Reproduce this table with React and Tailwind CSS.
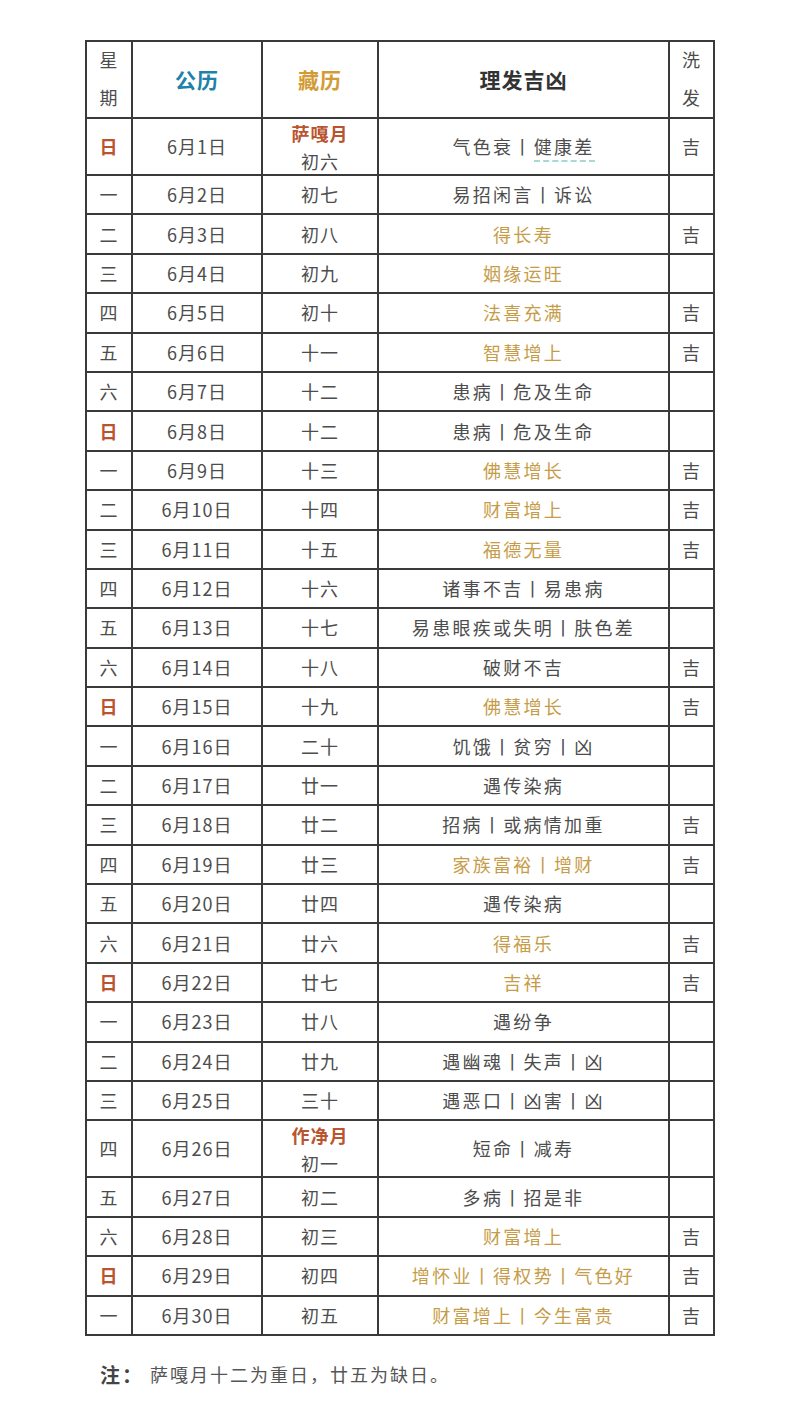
import React from "react";

const rows = [
  ["日", "6月1日", ["萨嘎月", "初六"], "气色衰丨健康差", true, "吉"],
  ["一", "6月2日", "初七", "易招闲言丨诉讼", false, ""],
  ["二", "6月3日", "初八", "得长寿", true, "吉"],
  ["三", "6月4日", "初九", "姻缘运旺", true, ""],
  ["四", "6月5日", "初十", "法喜充满", true, "吉"],
  ["五", "6月6日", "十一", "智慧增上", true, "吉"],
  ["六", "6月7日", "十二", "患病丨危及生命", false, ""],
  ["日", "6月8日", "十二", "患病丨危及生命", false, ""],
  ["一", "6月9日", "十三", "佛慧增长", true, "吉"],
  ["二", "6月10日", "十四", "财富增上", true, "吉"],
  ["三", "6月11日", "十五", "福德无量", true, "吉"],
  ["四", "6月12日", "十六", "诸事不吉丨易患病", false, ""],
  ["五", "6月13日", "十七", "易患眼疾或失明丨肤色差", false, ""],
  ["六", "6月14日", "十八", "破财不吉", false, "吉"],
  ["日", "6月15日", "十九", "佛慧增长", true, "吉"],
  ["一", "6月16日", "二十", "饥饿丨贫穷丨凶", false, ""],
  ["二", "6月17日", "廿一", "遇传染病", false, ""],
  ["三", "6月18日", "廿二", "招病丨或病情加重", false, "吉"],
  ["四", "6月19日", "廿三", "家族富裕丨增财", true, "吉"],
  ["五", "6月20日", "廿四", "遇传染病", false, ""],
  ["六", "6月21日", "廿六", "得福乐", true, "吉"],
  ["日", "6月22日", "廿七", "吉祥", true, "吉"],
  ["一", "6月23日", "廿八", "遇纷争", false, ""],
  ["二", "6月24日", "廿九", "遇幽魂丨失声丨凶", false, ""],
  ["三", "6月25日", "三十", "遇恶口丨凶害丨凶", false, ""],
  ["四", "6月26日", ["作净月", "初一"], "短命丨减寿", false, ""],
  ["五", "6月27日", "初二", "多病丨招是非", false, ""],
  ["六", "6月28日", "初三", "财富增上", true, "吉"],
  ["日", "6月29日", "初四", "增怀业丨得权势丨气色好", true, "吉"],
  ["一", "6月30日", "初五", "财富增上丨今生富贵", true, "吉"],
];

const cell =
  "flex items-center justify-center border-r-2 border-b-2 border-[#3a3a3a] text-center";

export default function App() {
  return (
    <div
      className="w-[800px] min-h-[1422px] bg-white pt-[40px] text-[#4d4d4d]"
      style={{ fontFamily: '"Noto Sans CJK SC", "Noto Sans", sans-serif' }}
    >
      <div className="ml-[85px] w-[630px] grid grid-cols-[46px_130px_116px_291px_45px] border-t-2 border-l-2 border-[#3a3a3a] text-[18px] tracking-[1px]">
        {/* header */}
        <div className={`${cell} h-[77px] flex-col leading-[38px] pb-[3px]`}>
          <span>星</span>
          <span>期</span>
        </div>
        <div className={`${cell} h-[77px] text-[21px] font-bold text-[#2281a8]`}>公历</div>
        <div className={`${cell} h-[77px] text-[21px] font-bold text-[#d39b35]`}>藏历</div>
        <div className={`${cell} h-[77px] text-[21px] font-bold text-[#333333]`}>理发吉凶</div>
        <div className={`${cell} h-[77px] flex-col leading-[38px] pb-[3px]`}>
          <span>洗</span>
          <span>发</span>
        </div>

        {rows.map((r, i) => {
          const tall = Array.isArray(r[2]);
          const h = tall ? "h-[57px]" : "h-[39.4px]";
          return (
            <React.Fragment key={i}>
              <div
                className={`${cell} ${h} ${
                  r[0] === "日" ? "text-[#b9542f] font-bold" : ""
                }`}
              >
                {r[0]}
              </div>
              <div className={`${cell} ${h}`}>{r[1]}</div>
              <div className={`${cell} ${h} ${tall ? "flex-col leading-[28px]" : ""}`}>
                {tall ? (
                  <>
                    <span className="font-bold text-[#b9542f]">{r[2][0]}</span>
                    <span>{r[2][1]}</span>
                  </>
                ) : (
                  r[2]
                )}
              </div>
              <div className={`${cell} ${h} tracking-[2.3px]`}>
                {i === 0 ? (
                  <span>
                    气色衰丨
                    <span className="border-b-2 border-dashed border-[#a9d9d2] pb-[1px]">
                      健康差
                    </span>
                  </span>
                ) : (
                  <span className={r[4] ? "text-[#c69c48]" : ""}>{r[3]}</span>
                )}
              </div>
              <div className={`${cell} ${h}`}>{r[5]}</div>
            </React.Fragment>
          );
        })}
      </div>

      <div className="mt-[24px] ml-[100px] flex items-center text-[18px] tracking-[2px]">
        <span className="text-[20px] font-bold text-[#444444]">注：</span>
        <span className="ml-[6px] text-[#555555]">萨嘎月十二为重日，廿五为缺日。</span>
      </div>
    </div>
  );
}
